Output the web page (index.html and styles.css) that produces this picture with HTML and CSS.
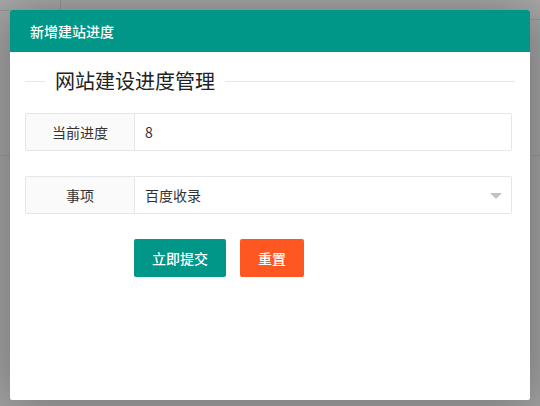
FILE: index.html
```html
<!DOCTYPE html>
<html lang="zh-CN">
<head>
<meta charset="utf-8">
<title>新增建站进度</title>
<link rel="stylesheet" href="styles.css">
</head>
<body>
<div class="dialog">
  <div class="dialog-title">新增建站进度</div>
  <div class="dialog-body">
    <div class="legend">
      <span class="legend-line legend-line-short"></span>
      <span class="legend-text">网站建设进度管理</span>
      <span class="legend-line legend-line-long"></span>
    </div>
    <form class="form">
      <div class="form-item">
        <div class="form-label">当前进度</div>
        <div class="form-input">8</div>
      </div>
      <div class="form-item">
        <div class="form-label">事项</div>
        <div class="form-input form-select">百度收录<span class="select-arrow"></span></div>
      </div>
      <div class="form-actions">
        <button type="button" class="btn">立即提交</button>
        <button type="button" class="btn btn-danger">重置</button>
      </div>
    </form>
  </div>
</div>
</body>
</html>
```

FILE: styles.css
```css
* { box-sizing: border-box; }

html, body {
  margin: 0;
  padding: 0;
  width: 540px;
  height: 406px;
  overflow: hidden;
}

body {
  font-family: "Noto Sans CJK SC", "Noto Sans", sans-serif;
  font-size: 14px;
  color: #333;
  background-color: #a0a0a0;
  background-image:
    linear-gradient(#949494, #949494),
    linear-gradient(#949494, #949494),
    linear-gradient(#949494, #949494),
    linear-gradient(#949494, #949494),
    linear-gradient(#a8a8a8, #a0a0a0 40px);
  background-size: 1px 10px, 12px 1px, 540px 1px, 12px 1px, 540px 406px;
  background-position: 60px 0, 0 10px, 0 155px, 528px 19px, 0 0;
  background-repeat: no-repeat;
}

.dialog {
  position: absolute;
  left: 10px;
  top: 10px;
  width: 520px;
  height: 390px;
  background: #fff;
  border-radius: 2px;
  box-shadow: 1px 1px 50px rgba(0, 0, 0, 0.3);
  display: flex;
  flex-direction: column;
}

.dialog-title {
  height: 42px;
  line-height: 42px;
  padding-left: 20px;
  background: #009688;
  color: #fff;
  font-size: 14px;
  font-weight: 500;
  border-radius: 2px 2px 0 0;
}

.dialog-body {
  padding: 15px;
}

.legend {
  display: flex;
  align-items: center;
  height: 28px;
}

.legend-line {
  height: 1px;
  background: #e6e6e6;
}

.legend-line-short { width: 20px; }
.legend-line-long { flex: 1; }

.legend-text {
  padding: 0 10px;
  font-size: 20px;
  font-weight: 400;
  line-height: 28px;
  color: #222;
}

.form {
  margin: 18px 3px 0 0;
}

.form-item {
  display: flex;
  height: 38px;
  margin-bottom: 25px;
}

.form-label {
  width: 110px;
  flex: none;
  border: 1px solid #e6e6e6;
  border-radius: 2px 0 0 2px;
  background: #fafafa;
  text-align: center;
  line-height: 36px;
  color: #333;
}

.form-input {
  flex: 1;
  border: 1px solid #e6e6e6;
  border-left: none;
  border-radius: 0 2px 2px 0;
  padding-left: 10px;
  line-height: 36px;
  color: #333;
  position: relative;
}

.select-arrow {
  position: absolute;
  right: 9px;
  top: 16px;
  width: 0;
  height: 0;
  border-left: 6px solid transparent;
  border-right: 6px solid transparent;
  border-top: 6px solid #c2c2c2;
}

.form-actions {
  display: flex;
  gap: 14px;
  padding-left: 109px;
}

.btn {
  height: 38px;
  line-height: 38px;
  padding: 0 18px;
  border: none;
  border-radius: 2px;
  background: #009688;
  color: #fff;
  font-family: "Noto Sans CJK SC", "Noto Sans", sans-serif;
  font-size: 14px;
  font-weight: 500;
  cursor: pointer;
}

.btn-danger {
  background: #ff5722;
}
```
